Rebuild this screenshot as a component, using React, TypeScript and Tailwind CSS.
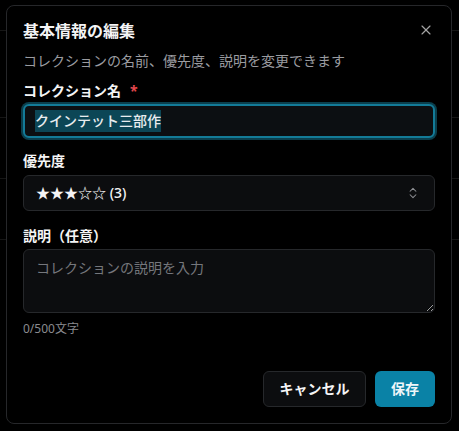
import React from "react";
import { X, ChevronsUpDown } from "lucide-react";

const font = { fontFamily: '"Noto Sans", "Noto Sans CJK JP", sans-serif' };

export default function App() {
  return (
    <div className="relative w-[459px] h-[431px] overflow-hidden bg-black" style={font}>
      {/* faint page behind the modal */}
      <div className="flex flex-col pt-[30px]">
        <div className="h-px bg-[#161616]" />
        <div className="h-[86px]" />
        <div className="h-px bg-[#161616]" />
        <div className="h-[60px]" />
        <div className="h-px bg-[#161616]" />
        <div className="h-[60px]" />
        <div className="h-px bg-[#161616]" />
      </div>

      <div className="absolute left-[6px] top-[5px] w-[446px] h-[419px] rounded-lg border border-[#26272a] bg-black px-4 pt-[13px] pb-4 flex flex-col">
        <button className="absolute right-[17px] top-[16px] text-[#a3a3a3]" aria-label="閉じる">
          <X size={16} strokeWidth={1.75} />
        </button>

        <h2 className="text-base leading-6 font-bold text-[#f4f4f5]">基本情報の編集</h2>
        <p className="mt-2 text-sm leading-5 text-[#9b9ca0]">
          コレクションの名前、優先度、説明を変更できます
        </p>

        <label className="mt-[10px] text-sm leading-5 font-bold text-[#f4f4f5]">
          コレクション名<span className="ml-[9px] text-[#e5484d]">*</span>
        </label>
        <div className="mt-[3px] h-[34px] rounded-md border-2 border-[#137b98] bg-[#0c0f12] ring-2 ring-[#0b3f4d] flex items-center px-[10px]">
          <span className="py-px text-sm leading-5 font-medium text-[#e8ecef] bg-[#0c4656]">クインテット三部作</span>
        </div>

        <label className="mt-[13px] text-sm leading-5 font-bold text-[#f4f4f5]">優先度</label>
        <div className="mt-1 h-9 rounded-md border border-[#26282b] bg-[#0c0d0f] flex items-center justify-between pl-3 pr-[14px]">
          <span className="text-sm font-medium text-[#f4f4f5]">★★★☆☆ (3)</span>
          <ChevronsUpDown size={14} className="text-[#8e8f93]" strokeWidth={1.75} />
        </div>

        <label className="mt-[15px] text-sm leading-5 font-bold text-[#f4f4f5]">説明（任意）</label>
        <textarea
          className="mt-[3px] h-16 rounded-md border border-[#26282b] bg-[#0c0d0f] px-3 py-2 text-sm text-[#f4f4f5] placeholder:text-[#75777c] outline-none"
          placeholder="コレクションの説明を入力"
          style={font}
        />
        <p className="mt-2 text-xs leading-4 text-[#8a8b8f]">0/500文字</p>

        <div className="mt-auto flex justify-end gap-[9px]">
          <button className="h-9 w-[103px] whitespace-nowrap rounded-md border border-[#26282b] bg-[#0c0d0f] text-sm font-bold text-[#f4f4f5]">
            キャンセル
          </button>
          <button className="h-9 w-[60px] rounded-md bg-[#0a82a6] text-sm font-bold text-[#eef6f9]">保存</button>
        </div>
      </div>
    </div>
  );
}
